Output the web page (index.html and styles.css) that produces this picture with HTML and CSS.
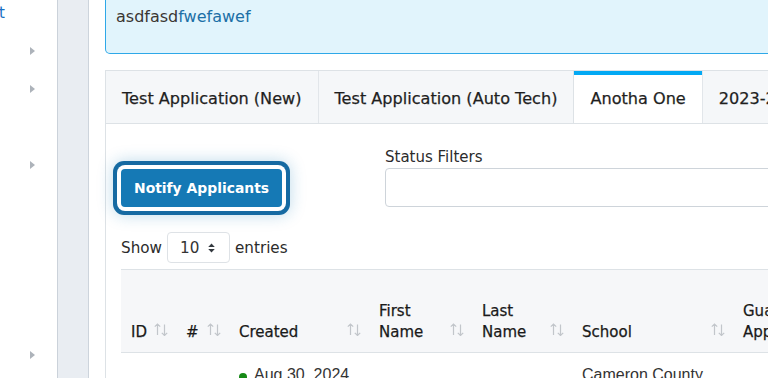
FILE: index.html
```html
<!DOCTYPE html>
<html lang="en">
<head>
<meta charset="utf-8">
<title>Applications</title>
<link rel="stylesheet" href="styles.css">
</head>
<body>
<div class="app">
  <aside class="sidebar">
    <ul class="nav">
      <li class="nav-item"><span class="nav-label">t</span></li>
      <li class="nav-item"><span class="caret"></span></li>
      <li class="nav-item"><span class="caret"></span></li>
      <li class="nav-item"></li>
      <li class="nav-item"><span class="caret"></span></li>
      <li class="nav-item"></li>
      <li class="nav-item"></li>
      <li class="nav-item"></li>
      <li class="nav-item"></li>
      <li class="nav-item"><span class="caret"></span></li>
    </ul>
  </aside>
  <div class="gutter"></div>
  <main class="main">
    <div class="inner">
      <div class="alert">asdfasd<a class="alert-link" href="#">fwefawef</a></div>

      <div class="tabs">
        <div class="tab">Test Application (New)</div>
        <div class="tab">Test Application (Auto Tech)</div>
        <div class="tab active">Anotha One</div>
        <div class="tab">2023-2024 Application</div>
      </div>

      <div class="panel">
        <div class="toolbar">
          <div class="toolbar-left">
            <button class="btn">Notify Applicants</button>
          </div>
          <div class="filter">
            <label class="filter-label">Status Filters</label>
            <div class="filter-input"></div>
          </div>
        </div>

        <div class="length">
          <span>Show</span>
          <div class="select">
            <span>10</span>
            <svg class="select-arrow" width="7" height="10" viewBox="0 0 7 10"><path d="M3.5 0.5 L6.8 4 H0.2 Z M3.5 9.5 L0.2 6 H6.8 Z" fill="#343a40"/></svg>
          </div>
          <span>entries</span>
        </div>

        <table class="grid">
          <colgroup>
            <col class="c-id"><col class="c-num"><col class="c-created"><col class="c-first"><col class="c-last"><col class="c-school"><col class="c-guard">
          </colgroup>
          <thead>
            <tr>
              <th><div class="th-inner"><span>ID</span><svg class="sort" width="14" height="13" viewBox="0 0 14 13"><path d="M3.5 12 V1 M0.8 3.7 L3.5 1 L6.2 3.7 M10.5 1.5 V12.5 M7.8 9.8 L10.5 12.5 L13.2 9.8" fill="none" stroke="#c2c6cb" stroke-width="1.2"/></svg></div></th>
              <th><div class="th-inner"><span>#</span><svg class="sort" width="14" height="13" viewBox="0 0 14 13"><path d="M3.5 12 V1 M0.8 3.7 L3.5 1 L6.2 3.7 M10.5 1.5 V12.5 M7.8 9.8 L10.5 12.5 L13.2 9.8" fill="none" stroke="#c2c6cb" stroke-width="1.2"/></svg></div></th>
              <th><div class="th-inner"><span>Created</span><svg class="sort" width="14" height="13" viewBox="0 0 14 13"><path d="M3.5 12 V1 M0.8 3.7 L3.5 1 L6.2 3.7 M10.5 1.5 V12.5 M7.8 9.8 L10.5 12.5 L13.2 9.8" fill="none" stroke="#c2c6cb" stroke-width="1.2"/></svg></div></th>
              <th><div class="th-inner"><span>First<br>Name</span><svg class="sort" width="14" height="13" viewBox="0 0 14 13"><path d="M3.5 12 V1 M0.8 3.7 L3.5 1 L6.2 3.7 M10.5 1.5 V12.5 M7.8 9.8 L10.5 12.5 L13.2 9.8" fill="none" stroke="#c2c6cb" stroke-width="1.2"/></svg></div></th>
              <th><div class="th-inner"><span>Last<br>Name</span><svg class="sort" width="14" height="13" viewBox="0 0 14 13"><path d="M3.5 12 V1 M0.8 3.7 L3.5 1 L6.2 3.7 M10.5 1.5 V12.5 M7.8 9.8 L10.5 12.5 L13.2 9.8" fill="none" stroke="#c2c6cb" stroke-width="1.2"/></svg></div></th>
              <th><div class="th-inner"><span>School</span><svg class="sort" width="14" height="13" viewBox="0 0 14 13"><path d="M3.5 12 V1 M0.8 3.7 L3.5 1 L6.2 3.7 M10.5 1.5 V12.5 M7.8 9.8 L10.5 12.5 L13.2 9.8" fill="none" stroke="#c2c6cb" stroke-width="1.2"/></svg></div></th>
              <th><div class="th-inner"><span>Guardian<br>Approval</span></div></th>
            </tr>
          </thead>
          <tbody>
            <tr>
              <td></td>
              <td></td>
              <td><span class="dot"></span>Aug 30, 2024</td>
              <td></td>
              <td></td>
              <td>Cameron County High School</td>
              <td></td>
            </tr>
          </tbody>
        </table>
      </div>
    </div>
  </main>
</div>
</body>
</html>
```

FILE: styles.css
```css
* { box-sizing: border-box; }

html, body {
  margin: 0;
  padding: 0;
  height: 378px;
  overflow: hidden;
  background: #ffffff;
  font-family: "DejaVu Sans", "Liberation Sans", sans-serif;
  color: #212529;
}

.app {
  display: flex;
  height: 378px;
}

/* sidebar */
.sidebar {
  width: 58px;
  flex: none;
  background: #ffffff;
  border-right: 1px solid #cbd2da;
  overflow: hidden;
}

.nav {
  list-style: none;
  margin: -6px 0 0;
  padding: 0;
}

.nav-item {
  height: 38px;
  display: flex;
  align-items: center;
  justify-content: flex-end;
  padding-right: 22px;
}

.nav-label {
  margin-right: auto;
  font-size: 15px;
  color: #1a6fc4;
  margin-left: -1px;
}

.caret {
  width: 0;
  height: 0;
  border-top: 4px solid transparent;
  border-bottom: 4px solid transparent;
  border-left: 5px solid #adb3ba;
}

.gutter {
  width: 31px;
  flex: none;
  background: #e9edf2;
  border-right: 1px solid #cdd4dc;
}

/* main */
.main {
  flex: 1;
  min-width: 0;
  overflow: hidden;
  padding-left: 16px;
}

.inner {
  width: 1100px;
}

.alert {
  height: 54px;
  background: #e1f4fc;
  border: 1px solid #2ea8e8;
  border-top: none;
  border-bottom-left-radius: 5px;
  padding: 5px 10px 0;
  font-size: 16px;
  line-height: 24px;
  color: #3a3633;
}

.alert-link {
  color: #1b6fa6;
  text-decoration: none;
}

/* tabs */
.tabs {
  margin-top: 16px;
  display: flex;
  background: #f5f7f9;
  border: 1px solid #dde2e6;
  border-right: none;
}

.tab {
  padding: 16px 16px 12px;
  font-size: 16.1px;
  line-height: 24px;
  color: #1f1f1f;
  border-right: 1px solid #e2e6ea;
  white-space: nowrap;
  -webkit-text-stroke: 0.25px #1f1f1f;
}

.tab.active {
  background: #ffffff;
  box-shadow: inset 0 4px 0 #03a9f4;
  border-left: 1px solid #dde2e6;
  margin-left: -1px;
}

/* panel */
.panel {
  border-left: 1px solid #dde2e6;
  padding: 22px 0 0 15px;
  min-height: 260px;
}

.toolbar {
  display: flex;
  align-items: flex-end;
}

.toolbar-left {
  width: 264px;
  flex: none;
}

.btn {
  display: block;
  height: 38px;
  padding: 0 13px;
  border: none;
  border-radius: 4px;
  background: #1579b5;
  color: #ffffff;
  font-family: "DejaVu Sans", "Liberation Sans", sans-serif;
  font-weight: bold;
  font-size: 13.9px;
  box-shadow: 0 0 0 4px #ffffff, 0 0 0 8px #166aa2, 0 0 16px 8px rgba(21, 121, 181, 0.28);
}

.filter {
  flex: 1;
  display: flex;
  flex-direction: column;
}

.filter-label {
  font-size: 15px;
  line-height: 22px;
  color: #2b2b2b;
}

.filter-input {
  height: 39px;
  border: 1px solid #ced4da;
  border-radius: 4px;
  background: #ffffff;
}

/* length */
.length {
  margin-top: 25px;
  display: flex;
  align-items: center;
  font-size: 15.2px;
  color: #2b2b2b;
}

.select {
  width: 63px;
  height: 31px;
  margin: 0 5px;
  border: 1px solid #dee2e6;
  border-radius: 4px;
  display: flex;
  align-items: center;
  justify-content: space-between;
  padding: 0 14px 0 12px;
  color: #333333;
}

/* table */
.grid {
  margin-top: 6px;
  width: 1000px;
  border-collapse: collapse;
  table-layout: fixed;
}

.c-id { width: 55px; }
.c-num { width: 53px; }
.c-created { width: 140px; }
.c-first { width: 103px; }
.c-last { width: 100px; }
.c-school { width: 161px; }
.c-guard { width: 388px; }

.grid thead tr {
  background: #f6f7f9;
  border-top: 1px solid #dde2e6;
  border-bottom: 1px solid #dde2e6;
}

.grid th {
  height: 83px;
  padding: 0 8px 9px 10px;
  vertical-align: bottom;
  text-align: left;
  font-size: 15px;
  font-weight: normal;
  line-height: 21px;
  color: #1a1a1a;
  -webkit-text-stroke: 0.25px #1a1a1a;
}

.th-inner {
  display: flex;
  justify-content: space-between;
  align-items: flex-end;
}

.sort {
  flex: none;
  margin-bottom: 7px;
}

.grid td {
  padding: 10px 10px 0;
  vertical-align: top;
  font-family: "Liberation Sans", Arial, sans-serif;
  font-size: 16px;
  line-height: 24px;
  color: #333333;
}

.dot {
  display: inline-block;
  width: 8px;
  height: 8px;
  border-radius: 50%;
  background: #178a17;
  margin-right: 7px;
  vertical-align: -1px;
}
```
